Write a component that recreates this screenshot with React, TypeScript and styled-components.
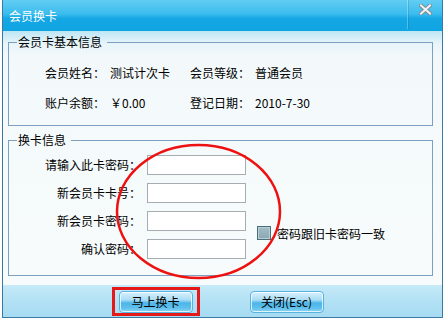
import styled, { createGlobalStyle } from 'styled-components';

const GlobalStyle = createGlobalStyle`
  html, body {
    margin: 0;
    padding: 0;
    background: #ffffff;
  }
  body {
    font-family: "Noto Sans CJK SC", "Noto Sans", sans-serif;
    font-size: 12px;
    color: #000;
  }
`;

const Window = styled.div`
  position: relative;
  box-sizing: border-box;
  width: 441px;
  height: 318px;
  margin-left: 2px;
  border: 1px solid #3a7aa2;
  border-top: none;
  display: flex;
  flex-direction: column;
`;

const TitleBar = styled.div`
  height: 31px;
  flex: none;
  display: flex;
  align-items: flex-start;
  background: linear-gradient(to bottom, #62cdf3 0%, #3bbcee 45%, #14a7e4 60%, #10a4e2 100%);
  color: #fff;
`;

const Title = styled.div`
  padding: 8px 0 0 6px;
  font-size: 12px;
  line-height: 16px;
`;

const CloseBox = styled.div`
  margin-left: auto;
  width: 35px;
  height: 29px;
  display: flex;
  justify-content: center;
  padding-top: 4px;
  box-sizing: border-box;
  border-left: 1px solid rgba(255, 255, 255, 0.28);
  box-shadow: inset 1px 0 0 rgba(0, 90, 140, 0.18);
`;

const Body = styled.div`
  flex: 1;
  padding: 4px 0 0 5px;
  background: linear-gradient(to bottom, #bde6f5 0px, #e6f4f9 12px, #f3f9fb 26px, #f7fbfb 100%);
`;

const Group = styled.fieldset<{ $gap?: number }>`
  margin: ${p => p.$gap ?? 0}px 0 0 0;
  padding: 0;
  width: 425px;
  box-sizing: border-box;
  border: 1px solid #7e9fbf;
  min-width: 0;
`;

const Legend = styled.legend`
  margin-left: 8px;
  padding: 0 5px 0 1px;
  font-size: 12px;
  line-height: 14px;
`;

const InfoGrid = styled.div`
  display: grid;
  grid-template-columns: 65px 80px 65px auto;
  grid-auto-rows: 18px;
  row-gap: 12px;
  padding: 15px 0 13px 36px;
  line-height: 18px;
`;

const FormGrid = styled.div`
  display: grid;
  grid-template-columns: 96px 99px auto;
  grid-auto-rows: 20px;
  column-gap: 6px;
  row-gap: 8px;
  padding: 8px 0 16px 36px;
`;

const FieldLabel = styled.label`
  text-align: right;
  line-height: 20px;
  white-space: nowrap;
`;

const TextBox = styled.input`
  width: 99px;
  height: 20px;
  box-sizing: border-box;
  margin: 0;
  padding: 0 2px;
  border: 1px solid #a5acb2;
  background: #fff;
  font: inherit;
  outline: none;
`;

const CheckRow = styled.div`
  grid-column: 3;
  grid-row: 3 / span 2;
  align-self: center;
  display: flex;
  align-items: center;
  gap: 6px;
  margin-left: 5px;
  margin-bottom: 4px;
  white-space: nowrap;
`;

const CheckBox = styled.span`
  width: 14px;
  height: 14px;
  box-sizing: border-box;
  border: 1px solid #4b6e7b;
  box-shadow: inset 0 0 0 1px #b9ced5;
  background: linear-gradient(to bottom, #a3bcc5, #8aa8b3);
`;

const Footer = styled.div`
  height: 32px;
  flex: none;
  display: flex;
  justify-content: center;
  gap: 57px;
  padding: 6px 3px 0 0;
  box-sizing: border-box;
  background: linear-gradient(to bottom, #c6eaf8 0%, #b3e1f5 50%, #a6dbf2 100%);
`;

const Marked = styled.span`
  position: relative;
  display: inline-flex;
  height: 22px;

  &::after {
    content: '';
    position: absolute;
    top: -4px;
    bottom: -3px;
    left: -7px;
    right: -7px;
    border: 3px solid #e41a1a;
    pointer-events: none;
  }
`;

const Button = styled.button`
  width: 74px;
  height: 22px;
  margin: 0;
  padding: 0;
  box-sizing: border-box;
  border: 1px solid #58b2df;
  border-radius: 4px;
  box-shadow: inset 0 0 0 1px rgba(255, 255, 255, 0.75);
  background: linear-gradient(to bottom, #d9f1fc 0%, #a8dcf5 40%, #4cb5e8 55%, #5fc0ed 80%, #8fd5f4 100%);
  font-family: inherit;
  font-size: 12px;
  color: #000;
  line-height: 20px;
`;

const Annotation = styled.svg`
  position: absolute;
  left: 110px;
  top: 140px;
  pointer-events: none;
`;

const CloseGlyph = () => (
  <svg width="13" height="11" viewBox="0 0 13 11">
    <path d="M2 1.5 L11 9.5 M11 1.5 L2 9.5" stroke="#7d8d97" strokeWidth="4" strokeLinecap="square" />
    <path d="M2 1.5 L11 9.5 M11 1.5 L2 9.5" stroke="#eef2f4" strokeWidth="2" strokeLinecap="square" />
  </svg>
);

const App = () => {
  return (
    <>
      <GlobalStyle />
      <Window>
        <TitleBar>
          <Title>会员换卡</Title>
          <CloseBox>
            <CloseGlyph />
          </CloseBox>
        </TitleBar>
        <Body>
          <Group>
            <Legend>会员卡基本信息</Legend>
            <InfoGrid>
              <span>会员姓名：</span>
              <span>测试计次卡</span>
              <span>会员等级：</span>
              <span>普通会员</span>
              <span>账户余额：</span>
              <span>￥0.00</span>
              <span>登记日期：</span>
              <span>2010-7-30</span>
            </InfoGrid>
          </Group>
          <Group $gap={7}>
            <Legend>换卡信息</Legend>
            <FormGrid>
              <FieldLabel>请输入此卡密码：</FieldLabel>
              <TextBox type="password" />
              <span />
              <FieldLabel>新会员卡卡号：</FieldLabel>
              <TextBox />
              <span />
              <FieldLabel>新会员卡密码：</FieldLabel>
              <TextBox type="password" />
              <CheckRow>
                <CheckBox />
                <span>密码跟旧卡密码一致</span>
              </CheckRow>
              <FieldLabel>确认密码：</FieldLabel>
              <TextBox type="password" />
            </FormGrid>
          </Group>
        </Body>
        <Footer>
          <Marked>
            <Button>马上换卡</Button>
          </Marked>
          <Button>关闭(Esc)</Button>
        </Footer>
        <Annotation width="180" height="145">
          <ellipse cx="85.5" cy="71.5" rx="81.5" ry="66.5" fill="none" stroke="#ee1111" strokeWidth="2.5" />
        </Annotation>
      </Window>
    </>
  );
};

export default App;
